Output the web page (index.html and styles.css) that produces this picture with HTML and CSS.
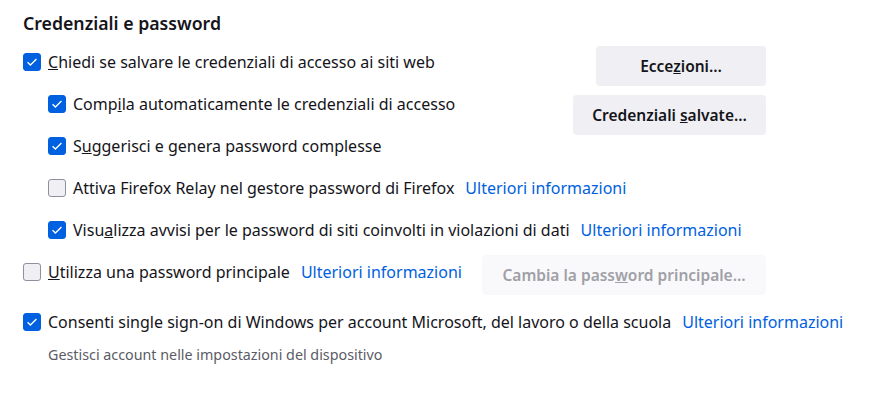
FILE: index.html
```html
<!DOCTYPE html>
<html lang="it">
<head>
<meta charset="utf-8">
<link rel="stylesheet" href="styles.css">
</head>
<body>
<section class="section">
  <h2 class="title">Credenziali e password</h2>
  <div class="top">
    <div class="rows">
      <label class="row"><span class="cb on"><svg viewBox="0 0 18 18"><path d="M4 9.2l3.2 3.2L14 5.6"/></svg></span><span><u>C</u>hiedi se salvare le credenziali di accesso ai siti web</span></label>
      <label class="row sub"><span class="cb on"><svg viewBox="0 0 18 18"><path d="M4 9.2l3.2 3.2L14 5.6"/></svg></span><span>Comp<u>i</u>la automaticamente le credenziali di accesso</span></label>
      <label class="row sub"><span class="cb on"><svg viewBox="0 0 18 18"><path d="M4 9.2l3.2 3.2L14 5.6"/></svg></span><span>S<u>u</u>ggerisci e genera password complesse</span></label>
    </div>
    <div class="buttons">
      <button class="btn btn-exc">Ecce<u>z</u>ioni…</button>
      <button class="btn btn-saved">Credenziali <u>s</u>alvate…</button>
    </div>
  </div>
  <label class="row sub"><span class="cb"></span><span>Attiva Firefox Relay nel gestore password di Firefox</span><a class="link">Ulteriori informazioni</a></label>
  <label class="row sub"><span class="cb on"><svg viewBox="0 0 18 18"><path d="M4 9.2l3.2 3.2L14 5.6"/></svg></span><span>Visu<u>a</u>lizza avvisi per le password di siti coinvolti in violazioni di dati</span><a class="link">Ulteriori informazioni</a></label>
  <div class="primary">
    <label class="row"><span class="cb"></span><span><u>U</u>tilizza una password principale</span><a class="link">Ulteriori informazioni</a></label>
    <button class="btn btn-disabled">Cambia la pass<u>w</u>ord principale…</button>
  </div>
  <label class="row sso"><span class="cb on"><svg viewBox="0 0 18 18"><path d="M4 9.2l3.2 3.2L14 5.6"/></svg></span><span>Consenti single sign-on di Windows per account Microsoft, del lavoro o della scuola</span><a class="link">Ulteriori informazioni</a></label>
  <p class="note">Gestisci account nelle impostazioni del dispositivo</p>
</section>
</body>
</html>
```
FILE: styles.css
```css
html, body {
  margin: 0;
  background: #ffffff;
}
body {
  font-family: "Noto Sans", "Open Sans", sans-serif;
  font-size: 16px;
  color: #15141a;
}
.section {
  padding: 10px 0 0 23px;
}
.title {
  margin: 0;
  font-size: 17.7px;
  font-weight: 600;
  line-height: 26px;
  height: 31px;
}
.top {
  display: flex;
  justify-content: space-between;
  align-items: flex-start;
  width: 743px;
}
.rows {
  display: flex;
  flex-direction: column;
}
.row {
  display: flex;
  align-items: center;
  height: 42px;
  white-space: nowrap;
}
.row.sub {
  padding-left: 25px;
}
.cb {
  box-sizing: border-box;
  width: 18px;
  height: 18px;
  border-radius: 3px;
  border: 1px solid #8f8f9d;
  background: #f0f0f4;
  margin-right: 7px;
  flex: none;
  display: flex;
}
.cb.on {
  background: #0061e0;
  border-color: #0061e0;
}
.cb svg {
  width: 16px;
  height: 16px;
}
.cb path {
  fill: none;
  stroke: #ffffff;
  stroke-width: 1.5;
}
.link {
  color: #0061e0;
  margin-left: 11px;
  cursor: pointer;
}
.buttons {
  display: flex;
  flex-direction: column;
  align-items: flex-end;
  gap: 9px;
  padding-top: 5px;
}
.btn {
  font-family: inherit;
  font-size: 15.5px;
  font-weight: 600;
  color: #15141a;
  background: #f0f0f4;
  border: none;
  border-radius: 4px;
  height: 40px;
  padding: 0 16px;
  white-space: nowrap;
}
.btn-exc {
  width: 170px;
}
.btn-saved {
  width: 193px;
}
.btn-disabled {
  background: #f9f9fb;
  color: #a0a0a6;
  width: 284px;
  margin-top: 4px;
}
.primary {
  display: flex;
  justify-content: space-between;
  align-items: flex-start;
  height: 42px;
  width: 743px;
}
.sso {
  margin-top: 8px;
}
.note {
  margin: 3px 0 0;
  padding-left: 25px;
  font-size: 14.3px;
  color: #5b5b66;
  line-height: 18px;
}
```
